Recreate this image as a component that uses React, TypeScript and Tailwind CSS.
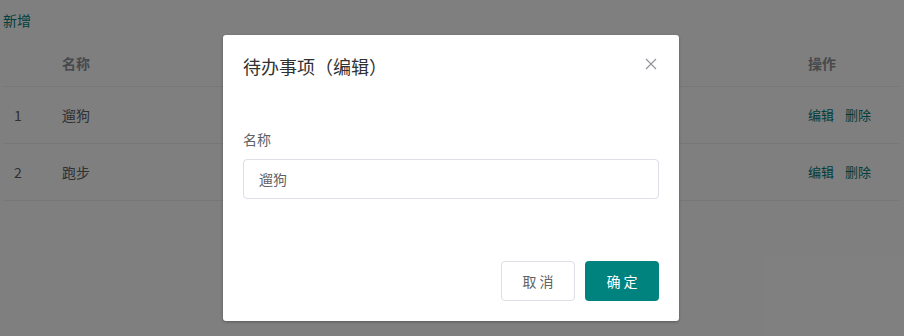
import React from "react";

const font = { fontFamily: '"Noto Sans CJK SC", "Noto Sans", sans-serif' };

export default function App() {
  const rows = [
    { id: 1, name: "遛狗" },
    { id: 2, name: "跑步" },
  ];
  return (
    <div className="relative w-[904px] h-[336px] bg-white overflow-hidden" style={font}>
      <div className="px-[3px] pt-[9px]">
        <div className="text-[14px] leading-[22px] text-[#00827f]">新增</div>
        <div className="mt-[10px] w-[896px]">
          <div className="flex items-center h-[46px] border-b border-[#ebeef5] text-[14px] font-semibold text-[#909399]">
            <div className="w-[59px] pl-[11px]"></div>
            <div className="flex-1">名称</div>
            <div className="w-[91px]">操作</div>
          </div>
          {rows.map((r) => (
            <div key={r.id} className="flex items-center h-[57px] border-b border-[#ebeef5] text-[14px] text-[#606266]">
              <div className="w-[59px] pl-[11px]">{r.id}</div>
              <div className="flex-1">{r.name}</div>
              <div className="w-[91px] flex gap-[11px] text-[13px] text-[#007b78]">
                <span>编辑</span>
                <span>删除</span>
              </div>
            </div>
          ))}
        </div>
      </div>

      <div className="absolute inset-0 bg-black/50"></div>

      <div className="absolute left-[223px] top-[35px] w-[456px] h-[286px] bg-white rounded-[3px] shadow-[0_1px_3px_rgba(0,0,0,0.3)] flex flex-col">
        <div className="flex items-center justify-between px-5 pt-[19px]">
          <div className="text-[18px] leading-[24px] text-[#303133]">待办事项（编辑）</div>
          <svg width="12" height="12" viewBox="0 0 12 12" className="mr-[2px] -mt-[5px]">
            <path d="M1 1 L11 11 M11 1 L1 11" stroke="#909399" strokeWidth="1.1" fill="none" />
          </svg>
        </div>
        <div className="px-5 pt-[51px]">
          <div className="text-[14px] leading-[20px] text-[#606266]">名称</div>
          <div className="mt-[10px] h-[40px] w-[416px] border border-[#dcdfe6] rounded-[4px] flex items-center pl-[15px] text-[14px] text-[#606266]">
            遛狗
          </div>
        </div>
        <div className="flex-1"></div>
        <div className="flex justify-end gap-[10px] px-5 pb-[20px]">
          <div className="w-[74px] h-[40px] border border-[#dcdfe6] rounded-[4px] flex items-center justify-center text-[14px] text-[#606266]">
            取 消
          </div>
          <div className="w-[74px] h-[40px] bg-[#00827f] rounded-[4px] flex items-center justify-center text-[14px] text-white">
            确 定
          </div>
        </div>
      </div>
    </div>
  );
}
